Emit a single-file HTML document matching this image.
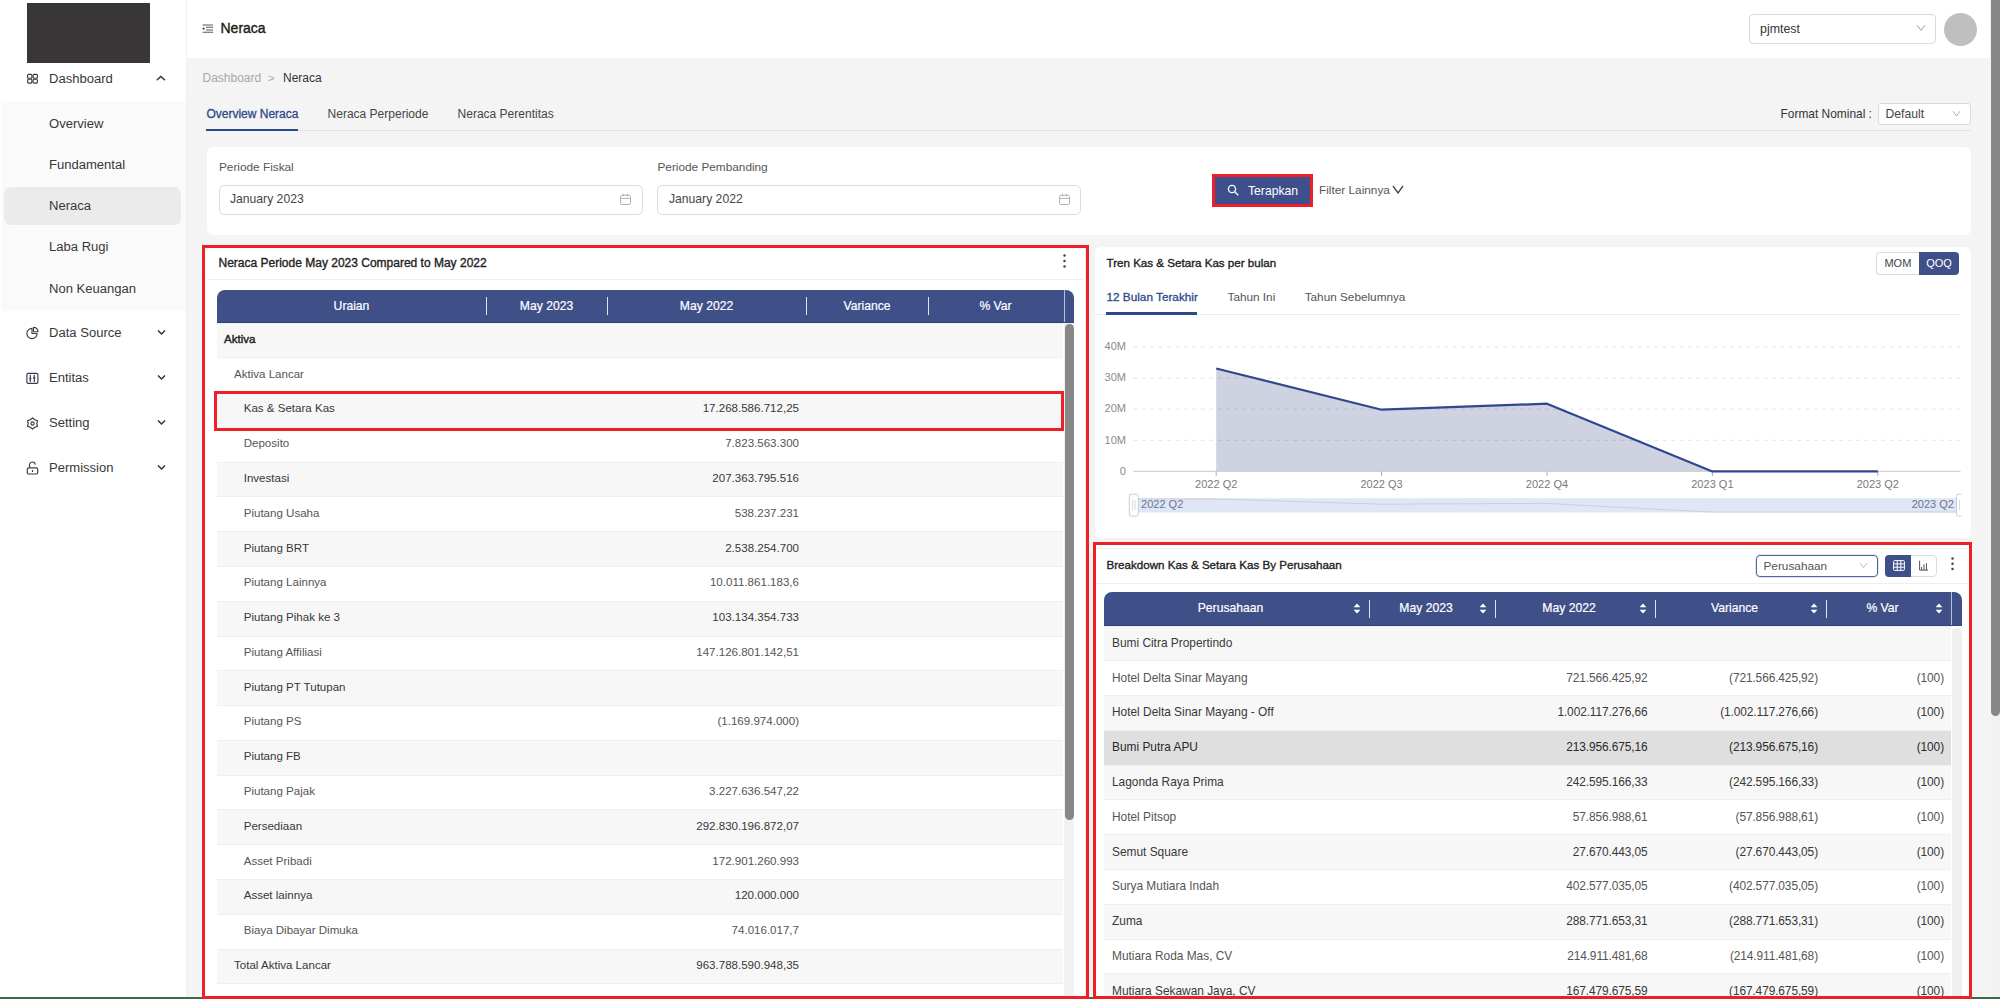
<!DOCTYPE html>
<html><head><meta charset="utf-8"><title>Neraca</title>
<style>
*{box-sizing:border-box;margin:0;padding:0}
html,body{width:2000px;height:999px;overflow:hidden;background:#f4f4f4;font-family:"Liberation Sans",sans-serif;color:#333;position:relative}
.a{position:absolute}
.t{position:absolute;white-space:nowrap;line-height:20px;height:20px}
.side .it{position:absolute;left:49px;font-size:13.05px;color:#383838;white-space:nowrap;line-height:20px;height:20px}
.side svg{position:absolute}
.card{position:absolute;background:#fff;border-radius:6px}
.red{position:absolute;border:3px solid #ee1f27}
.thead{position:absolute;background:#3f5089;border-radius:8px 8px 0 0;border-bottom:1px solid #2c4282;color:#fff;font-size:12.15px;-webkit-text-stroke:0.2px #fff}
.thead .c{position:absolute;top:0;height:100%;display:flex;align-items:center;justify-content:center;white-space:nowrap}
.thead .sep{position:absolute;width:1.4px;background:#dfe4ef}
.rows .r{position:absolute;height:34.78px;border-top:1px solid #efefef;font-size:var(--fs,11.55px);color:#3a3a3a;white-space:nowrap}
.rows .r.g{background:#f7f7f7;color:#383838}
.rows .r.w{background:#fff;color:#555}
.rows .r.h{background:#dfdfdf;color:#2a2a2a}
.rows .r span{position:absolute;top:var(--ty,-0.6px);line-height:33.78px}
.rows .r .v{text-align:right;letter-spacing:var(--ls,0)}
</style></head><body>

<!-- ============ SIDEBAR ============ -->
<div class="side a" style="left:0;top:0;width:186px;height:999px;background:#fff">
  <div class="a" style="left:27px;top:3px;width:123px;height:60px;background:#383637"></div>
  <!-- dashboard -->
  <svg style="left:26px;top:73px" width="13" height="12" viewBox="0 0 13 12"><g fill="none" stroke="#3a3a4a" stroke-width="1.15"><rect x="1.6" y="1.3" width="4.3" height="3.9" rx="1"/><rect x="7.1" y="1.3" width="4.3" height="3.9" rx="1"/><rect x="1.6" y="6.2" width="4.3" height="3.9" rx="1"/><rect x="7.1" y="6.2" width="4.3" height="3.9" rx="1"/></g></svg>
  <div class="it" style="top:68.5px">Dashboard</div>
  <svg style="left:156px;top:74px" width="10" height="8" viewBox="0 0 10 8"><path d="M1.3 5.7 L4.8 2.4 L8.5 5.7" fill="none" stroke="#333" stroke-width="1.5" stroke-linecap="round"/></svg>

  <div class="a" style="left:1px;top:100.5px;width:185px;height:210.5px;background:#fafafa"></div>
  <div class="a" style="left:4px;top:187px;width:177px;height:38px;background:#ebebeb;border-radius:7px"></div>
  <div class="it" style="top:113.9px">Overview</div>
  <div class="it" style="top:154.6px">Fundamental</div>
  <div class="it" style="top:195.9px">Neraca</div>
  <div class="it" style="top:237.1px">Laba Rugi</div>
  <div class="it" style="top:278.6px">Non Keuangan</div>

  <svg style="left:26px;top:326px" width="14" height="14" viewBox="0 0 14 14"><g fill="none" stroke="#3a3a4a" stroke-width="1.15" stroke-linejoin="round"><path d="M6 2.4 A5.1 5.1 0 1 0 11.1 7.5 L6 7.5 Z"/><path d="M7.5 1.2 A4.5 4.5 0 0 1 12 5.7 L7.5 5.7 Z"/></g></svg>
  <div class="it" style="top:322.7px">Data Source</div>
  <svg style="left:157px;top:329px" width="9" height="7" viewBox="0 0 9 7"><path d="M1 1.5 L4.5 5 L8 1.5" fill="none" stroke="#333" stroke-width="1.5"/></svg>

  <svg style="left:26px;top:372px" width="13" height="13" viewBox="0 0 13 13"><g fill="none" stroke="#3a3a4a" stroke-width="1.15"><rect x="0.9" y="1.3" width="11" height="10" rx="1.3"/><path d="M4.3 2.8v7.2M8.3 2.8v7.2"/></g><g fill="#3a3a4a"><circle cx="4.3" cy="6.6" r="1.1"/><circle cx="8.3" cy="5.9" r="1.1"/></g></svg>
  <div class="it" style="top:367.5px">Entitas</div>
  <svg style="left:157px;top:374px" width="9" height="7" viewBox="0 0 9 7"><path d="M1 1.5 L4.5 5 L8 1.5" fill="none" stroke="#333" stroke-width="1.5"/></svg>

  <svg style="left:25.75px;top:417px" width="13" height="13" viewBox="0 0 13 13"><g fill="none" stroke="#3a3a4a" stroke-width="1.15" stroke-linejoin="round"><path d="M6.50 0.80 L8.65 2.78 L11.44 3.65 L10.80 6.50 L11.44 9.35 L8.65 10.22 L6.50 12.20 L4.35 10.22 L1.56 9.35 L2.20 6.50 L1.56 3.65 L4.35 2.78Z"/><circle cx="6.5" cy="6.5" r="1.6"/></g></svg>
  <div class="it" style="top:413.2px">Setting</div>
  <svg style="left:157px;top:419px" width="9" height="7" viewBox="0 0 9 7"><path d="M1 1.5 L4.5 5 L8 1.5" fill="none" stroke="#333" stroke-width="1.5"/></svg>

  <svg style="left:26px;top:461px" width="13" height="14" viewBox="0 0 13 14"><g fill="none" stroke="#3a3a4a" stroke-width="1.15" stroke-linejoin="round"><path d="M3.5 6.6V4.3A2.9 2.9 0 0 1 9.3 3.6"/><rect x="1.3" y="6.8" width="10.4" height="6.2" rx="1.4"/><path d="M6.5 9v2"/></g></svg>
  <div class="it" style="top:458px">Permission</div>
  <svg style="left:157px;top:464px" width="9" height="7" viewBox="0 0 9 7"><path d="M1 1.5 L4.5 5 L8 1.5" fill="none" stroke="#333" stroke-width="1.5"/></svg>
</div>
<div class="a" style="left:186px;top:0;width:1px;height:999px;background:#efefef"></div>

<!-- ============ HEADER ============ -->
<div class="a" style="left:187px;top:0;width:1803px;height:58px;background:#fff"></div>
<svg class="a" style="left:202px;top:23.5px" width="12" height="10" viewBox="0 0 12 10"><g stroke="#5a5a5a" stroke-width="1.1" stroke-linecap="round"><path d="M1 1h9.6M4.4 3.2h6.2M4.4 6h6.2M1 8.2h9.6"/></g><circle cx="1.6" cy="4.6" r="1.05" fill="#333"/></svg>
<div class="t" style="left:220.5px;top:18.3px;font-size:14px;color:#222;-webkit-text-stroke:0.4px #222">Neraca</div>

<div class="a" style="left:1749px;top:13.5px;width:186.5px;height:30px;border:1px solid #d9d9d9;border-radius:4px;background:#fff"></div>
<div class="t" style="left:1760px;top:18.5px;font-size:12.38px;color:#333">pjmtest</div>
<svg class="a" style="left:1916px;top:24px" width="10" height="8" viewBox="0 0 10 8"><path d="M1 1.2 L5 6.3 L9 1.2" fill="none" stroke="#999" stroke-width="1"/></svg>
<div class="a" style="left:1943.75px;top:12.5px;width:33px;height:33px;border-radius:50%;background:#bfbfbf"></div>

<!-- page scrollbar -->
<div class="a" style="left:1990.5px;top:0;width:9.5px;height:999px;background:#f1f1f1"></div>
<div class="a" style="left:1991px;top:0;width:9px;height:716px;background:#878787;border-radius:0 0 5px 5px"></div>

<!-- ============ BREADCRUMB / TABS ============ -->
<div class="t" style="left:202.5px;top:68.3px;font-size:12px;color:#a8a8a8">Dashboard</div>
<div class="t" style="left:268px;top:68.3px;font-size:11px;color:#a8a8a8">&gt;</div>
<div class="t" style="left:283px;top:68.3px;font-size:12px;color:#333">Neraca</div>

<div class="a" style="left:206px;top:130px;width:1765px;height:1px;background:#e3e3e3"></div>
<div class="t" style="left:206.4px;top:103.5px;font-size:12px;color:#2d4a8c;-webkit-text-stroke:0.3px #2d4a8c">Overview Neraca</div>
<div class="a" style="left:206px;top:129px;width:92px;height:2px;background:#2e4890"></div>
<div class="t" style="left:327.6px;top:103.5px;font-size:12px;color:#444">Neraca Perperiode</div>
<div class="t" style="left:457.6px;top:103.5px;font-size:12px;color:#444">Neraca Perentitas</div>

<div class="t" style="left:1780.5px;top:103.5px;font-size:11.93px;color:#333">Format Nominal :</div>
<div class="a" style="left:1878px;top:103px;width:93px;height:21.5px;border:1px solid #d9d9d9;border-radius:3px;background:#fff"></div>
<div class="t" style="left:1885.5px;top:103.5px;font-size:12.18px;color:#444">Default</div>
<svg class="a" style="left:1952px;top:109.5px" width="9" height="8" viewBox="0 0 9 8"><path d="M1 1.2 L4.5 6 L8 1.2" fill="none" stroke="#aaa" stroke-width="1"/></svg>

<!-- ============ FILTER CARD ============ -->
<div class="card" style="left:207px;top:147px;width:1763.5px;height:88px"></div>
<div class="t" style="left:219px;top:156.5px;font-size:11.8px;color:#555">Periode Fiskal</div>
<div class="a" style="left:219px;top:184.5px;width:423.5px;height:30.5px;border:1px solid #dcdcdc;border-radius:5px;background:#fff"></div>
<div class="t" style="left:230px;top:189px;font-size:12.17px;color:#444">January 2023</div>
<svg class="a" style="left:619px;top:193px" width="13" height="13" viewBox="0 0 13 13"><g fill="none" stroke="#b0b0b0" stroke-width="1"><rect x="1.6" y="2.2" width="9.9" height="9.3" rx="1.3"/><path d="M1.6 5.4h9.9M4.6 0.8v2.6M8.6 0.8v2.6"/></g></svg>

<div class="t" style="left:657.5px;top:156.5px;font-size:11.8px;color:#555">Periode Pembanding</div>
<div class="a" style="left:657px;top:184.5px;width:423.5px;height:30.5px;border:1px solid #dcdcdc;border-radius:5px;background:#fff"></div>
<div class="t" style="left:669px;top:189px;font-size:12.17px;color:#444">January 2022</div>
<svg class="a" style="left:1058px;top:193px" width="13" height="13" viewBox="0 0 13 13"><g fill="none" stroke="#b0b0b0" stroke-width="1"><rect x="1.6" y="2.2" width="9.9" height="9.3" rx="1.3"/><path d="M1.6 5.4h9.9M4.6 0.8v2.6M8.6 0.8v2.6"/></g></svg>

<div class="a" style="left:1215px;top:177px;width:95px;height:27px;background:#3f4f8b"></div>
<div class="red" style="left:1212px;top:174px;width:101px;height:33px"></div>
<svg class="a" style="left:1227px;top:184px" width="13" height="13" viewBox="0 0 13 13"><g fill="none" stroke="#fff" stroke-width="1.3"><circle cx="5" cy="5" r="3.6"/><path d="M7.7 7.7l3.6 3.6"/></g></svg>
<div class="t" style="left:1248px;top:180.5px;font-size:12.16px;color:#fff">Terapkan</div>
<div class="t" style="left:1319px;top:180px;font-size:11.82px;color:#555">Filter Lainnya</div>
<svg class="a" style="left:1392px;top:185px" width="12" height="9" viewBox="0 0 12 9"><path d="M1 1 L6 8 L11 1" fill="none" stroke="#444" stroke-width="1.3"/></svg>

<!-- ============ LEFT CARD ============ -->
<div class="a" style="left:205px;top:247.5px;width:880px;height:752px;background:#fff"></div>
<div class="t" style="left:218.5px;top:252.5px;font-size:12px;color:#222;-webkit-text-stroke:0.35px #222">Neraca Periode May 2023 Compared to May 2022</div>
<svg class="a" style="left:1062px;top:253px" width="5" height="16" viewBox="0 0 5 16"><g fill="#444"><circle cx="2.5" cy="2.5" r="1.25"/><circle cx="2.5" cy="8" r="1.25"/><circle cx="2.5" cy="13.5" r="1.25"/></g></svg>
<div class="a" style="left:207px;top:279px;width:876px;height:1px;background:#efefef"></div>

<div class="thead" style="left:217px;top:289.5px;width:856.5px;height:33px">
  <div class="c" style="left:0;width:269px">Uraian</div>
  <div class="c" style="left:269px;width:121px">May 2023</div>
  <div class="c" style="left:390px;width:199px">May 2022</div>
  <div class="c" style="left:589px;width:122px">Variance</div>
  <div class="c" style="left:711px;width:135px">% Var</div>
  <div class="sep" style="left:268.5px;top:7px;height:18.5px"></div>
  <div class="sep" style="left:389.5px;top:7px;height:18.5px"></div>
  <div class="sep" style="left:588.5px;top:7px;height:18.5px"></div>
  <div class="sep" style="left:710.5px;top:7px;height:18.5px"></div>
  <div class="a" style="left:846.5px;top:0;width:1px;height:32px;background:#b9c1d8"></div>
</div>
<div class="rows a" style="left:217px;top:322.5px;width:846px;height:673px;overflow:hidden">
<div class="r g" style="top:0.00px;width:846px"><span style="left:7px;color:#222;-webkit-text-stroke:0.4px #222">Aktiva</span></div>
<div class="r w" style="top:34.78px;width:846px"><span style="left:17px">Aktiva Lancar</span></div>
<div class="r g" style="top:69.56px;width:846px"><span style="left:26.7px">Kas &amp; Setara Kas</span><span class="v" style="right:264px">17.268.586.712,25</span></div>
<div class="r w" style="top:104.34px;width:846px"><span style="left:26.7px">Deposito</span><span class="v" style="right:264px">7.823.563.300</span></div>
<div class="r g" style="top:139.12px;width:846px"><span style="left:26.7px">Investasi</span><span class="v" style="right:264px">207.363.795.516</span></div>
<div class="r w" style="top:173.90px;width:846px"><span style="left:26.7px">Piutang Usaha</span><span class="v" style="right:264px">538.237.231</span></div>
<div class="r g" style="top:208.68px;width:846px"><span style="left:26.7px">Piutang BRT</span><span class="v" style="right:264px">2.538.254.700</span></div>
<div class="r w" style="top:243.46px;width:846px"><span style="left:26.7px">Piutang Lainnya</span><span class="v" style="right:264px">10.011.861.183,6</span></div>
<div class="r g" style="top:278.24px;width:846px"><span style="left:26.7px">Piutang Pihak ke 3</span><span class="v" style="right:264px">103.134.354.733</span></div>
<div class="r w" style="top:313.02px;width:846px"><span style="left:26.7px">Piutang Affiliasi</span><span class="v" style="right:264px">147.126.801.142,51</span></div>
<div class="r g" style="top:347.80px;width:846px"><span style="left:26.7px">Piutang PT Tutupan</span></div>
<div class="r w" style="top:382.58px;width:846px"><span style="left:26.7px">Piutang PS</span><span class="v" style="right:264px">(1.169.974.000)</span></div>
<div class="r g" style="top:417.36px;width:846px"><span style="left:26.7px">Piutang FB</span></div>
<div class="r w" style="top:452.14px;width:846px"><span style="left:26.7px">Piutang Pajak</span><span class="v" style="right:264px">3.227.636.547,22</span></div>
<div class="r g" style="top:486.92px;width:846px"><span style="left:26.7px">Persediaan</span><span class="v" style="right:264px">292.830.196.872,07</span></div>
<div class="r w" style="top:521.70px;width:846px"><span style="left:26.7px">Asset Pribadi</span><span class="v" style="right:264px">172.901.260.993</span></div>
<div class="r g" style="top:556.48px;width:846px"><span style="left:26.7px">Asset lainnya</span><span class="v" style="right:264px">120.000.000</span></div>
<div class="r w" style="top:591.26px;width:846px"><span style="left:26.7px">Biaya Dibayar Dimuka</span><span class="v" style="right:264px">74.016.017,7</span></div>
<div class="r g" style="top:626.04px;width:846px"><span style="left:17px">Total Aktiva Lancar</span><span class="v" style="right:264px">963.788.590.948,35</span></div>
<div class="r w" style="top:660.82px;width:846px"><span style="left:0px"></span></div>

</div>
<div class="a" style="left:1064px;top:322.5px;width:10px;height:673px;background:#f1f1f1"></div>
<div class="a" style="left:1065px;top:324px;width:9px;height:496px;background:#878787;border-radius:4.5px"></div>
<div class="red" style="left:214.3px;top:391px;width:849.7px;height:39.5px"></div>
<div class="red" style="left:202px;top:244.5px;width:887px;height:754.5px;z-index:2"></div>

<!-- ============ CHART CARD ============ -->
<div class="card" style="left:1094.5px;top:247px;width:876px;height:290.5px"></div>
<div class="t" style="left:1106.5px;top:252.5px;font-size:11.6px;color:#222;-webkit-text-stroke:0.35px #222">Tren Kas &amp; Setara Kas per bulan</div>
<div class="a" style="left:1876.4px;top:252.2px;width:43px;height:22.4px;border:1px solid #d9d9d9;border-right:none;border-radius:4px 0 0 4px;background:#fff"></div>
<div class="a" style="left:1918.9px;top:252.2px;width:40.3px;height:22.4px;background:#3f5089;border-radius:0 4px 4px 0"></div>
<div class="t" style="left:1876.4px;top:252.5px;width:43px;text-align:center;font-size:11px;color:#444">MOM</div>
<div class="t" style="left:1918.9px;top:252.5px;width:40.3px;text-align:center;font-size:11px;color:#fff">QOQ</div>
<div class="a" style="left:1095px;top:313.5px;width:865px;height:1px;background:#ececec"></div>
<div class="t" style="left:1106.5px;top:286.7px;font-size:11.78px;color:#2d4a8c;-webkit-text-stroke:0.3px #2d4a8c">12 Bulan Terakhir</div>
<div class="a" style="left:1106px;top:312px;width:91px;height:2.5px;background:#2e4890"></div>
<div class="t" style="left:1227.5px;top:286.7px;font-size:11.78px;color:#555">Tahun Ini</div>
<div class="t" style="left:1304.7px;top:286.7px;font-size:11.78px;color:#555">Tahun Sebelumnya</div>
<svg class="a" style="left:0;top:0" width="2000" height="999" viewBox="0 0 2000 999">
<g font-family="Liberation Sans" font-size="11.04" fill="#8a8a8a"><text x="1126" y="350.2" text-anchor="end">40M</text><text x="1126" y="381.3" text-anchor="end">30M</text><text x="1126" y="412.4" text-anchor="end">20M</text><text x="1126" y="443.5" text-anchor="end">10M</text><text x="1126" y="474.6" text-anchor="end">0</text></g>
<path d="M1216.2,471.4 L1216.2,368.5 L1381.6,409.7 L1547.0,403.7 L1712.4,471.4 L1877.8,471.4 L1877.8,471.4 Z" fill="#3f5089" fill-opacity="0.25"/>
<line x1="1133.5" y1="347" x2="1960.5" y2="347" stroke="#000" stroke-opacity="0.11" stroke-width="1" stroke-dasharray="4 4.4"/><line x1="1133.5" y1="378.1" x2="1960.5" y2="378.1" stroke="#000" stroke-opacity="0.11" stroke-width="1" stroke-dasharray="4 4.4"/><line x1="1133.5" y1="409.2" x2="1960.5" y2="409.2" stroke="#000" stroke-opacity="0.11" stroke-width="1" stroke-dasharray="4 4.4"/><line x1="1133.5" y1="440.3" x2="1960.5" y2="440.3" stroke="#000" stroke-opacity="0.11" stroke-width="1" stroke-dasharray="4 4.4"/>

<line x1="1133.5" y1="471.4" x2="1960.5" y2="471.4" stroke="#d2d2d2" stroke-width="1.2"/>
<line x1="1216.2" y1="471.4" x2="1216.2" y2="476" stroke="#aaa" stroke-width="1"/><line x1="1381.6" y1="471.4" x2="1381.6" y2="476" stroke="#aaa" stroke-width="1"/><line x1="1547.0" y1="471.4" x2="1547.0" y2="476" stroke="#aaa" stroke-width="1"/><line x1="1712.4" y1="471.4" x2="1712.4" y2="476" stroke="#aaa" stroke-width="1"/><line x1="1877.8" y1="471.4" x2="1877.8" y2="476" stroke="#aaa" stroke-width="1"/>
<polyline points="1216.2,368.5 1381.6,409.7 1547.0,403.7 1712.4,471.4 1877.8,471.4" fill="none" stroke="#2f4690" stroke-width="2.2" stroke-linejoin="round"/>
<g font-family="Liberation Sans" font-size="11.04" fill="#7a7a7a"><text x="1216.2" y="487.7" text-anchor="middle">2022 Q2</text><text x="1381.6" y="487.7" text-anchor="middle">2022 Q3</text><text x="1547.0" y="487.7" text-anchor="middle">2022 Q4</text><text x="1712.4" y="487.7" text-anchor="middle">2023 Q1</text><text x="1877.8" y="487.7" text-anchor="middle">2023 Q2</text></g>
<rect x="1133.5" y="498.2" width="823.5" height="14.3" fill="#dfe7f6"/>
<path d="M1133.5,499.0 L1215.9,499.0 L1380.5,504.2 L1545.2,503.4 L1710.0,512.0 L1874.6,512.0 L1957,512" fill="none" stroke="#c3c9d6" stroke-width="0.8"/>
<rect x="1129.3" y="494.2" width="9" height="22" rx="2" fill="#fff" stroke="#c9ced8" stroke-width="1"/>
<path d="M1132.6 500v10M1135 500v10" stroke="#c9ced8" stroke-width="0.8"/>
<path d="M1961.5 494.2 H1958.5 Q1956.5 494.2 1956.5 496.2 V514.2 Q1956.5 516.2 1958.5 516.2 H1961.5" fill="#fff" stroke="#c9ced8" stroke-width="1"/><path d="M1959.5 500v10" stroke="#c9ced8" stroke-width="0.8"/>
<g font-family="Liberation Sans" font-size="11.04" fill="#6b7390"><text x="1141" y="508">2022 Q2</text><text x="1954" y="508" text-anchor="end">2023 Q2</text></g>
</svg>

<!-- ============ BREAKDOWN CARD ============ -->
<div class="a" style="left:1095.5px;top:545px;width:873.5px;height:454px;background:#fff"></div>
<div class="a" style="left:1097px;top:547.5px;width:870px;height:1px;background:#efefef"></div>
<div class="t" style="left:1106.5px;top:555.3px;font-size:11.6px;color:#222;-webkit-text-stroke:0.35px #222">Breakdown Kas &amp; Setara Kas By Perusahaan</div>
<div class="a" style="left:1756px;top:554.75px;width:122px;height:22.5px;border:1.3px solid #55659c;border-radius:4px;background:#fff;box-shadow:0 0 0 1px rgba(63,80,137,0.15)"></div>
<div class="t" style="left:1763.5px;top:556px;font-size:11.8px;color:#555">Perusahaan</div>
<svg class="a" style="left:1858.5px;top:562px" width="9" height="7" viewBox="0 0 9 7"><path d="M1 1.2 L4.5 5.5 L8 1.2" fill="none" stroke="#bbb" stroke-width="1"/></svg>
<div class="a" style="left:1885.25px;top:555px;width:51.6px;height:21.5px;border:1px solid #dcdcdc;border-radius:4px;background:#fff"></div>
<div class="a" style="left:1885.25px;top:555px;width:26px;height:21.5px;background:#3f5089;border-radius:4px 0 0 4px"></div>
<svg class="a" style="left:1892.5px;top:559.7px" width="12" height="11" viewBox="0 0 12 11"><g fill="none" stroke="#fff" stroke-width="1"><rect x="0.6" y="0.6" width="10.8" height="9.8" rx="1"/><path d="M0.6 3.9h10.8M0.6 7.2h10.8M4.2 0.6v9.8M7.8 0.6v9.8"/></g></svg>
<svg class="a" style="left:1918px;top:559.5px" width="11" height="11" viewBox="0 0 11 11"><g fill="none" stroke="#444" stroke-width="0.9"><path d="M1.6 0.8V10.1H10"/><path d="M3.6 10V7M6 10V4.2M8.5 10V3.2"/></g></svg>
<svg class="a" style="left:1949.5px;top:556px" width="5" height="16" viewBox="0 0 5 16"><g fill="#444"><circle cx="2.5" cy="2.5" r="1.25"/><circle cx="2.5" cy="7.8" r="1.25"/><circle cx="2.5" cy="13" r="1.25"/></g></svg>
<div class="a" style="left:1097px;top:582.5px;width:871px;height:1px;background:#efefef"></div>
<div class="thead" style="left:1104px;top:591.5px;width:857.5px;height:34px">
<div class="c" style="left:0px;width:253px">Perusahaan</div><svg class="a" style="left:249.0px;top:11.5px" width="8" height="11" viewBox="0 0 8 11"><path d="M4 0.6 L7.4 4.3 L0.6 4.3Z M4 10.4 L7.4 6.7 L0.6 6.7Z" fill="#fff"/></svg><div class="c" style="left:265px;width:114px">May 2023</div><svg class="a" style="left:375.0px;top:11.5px" width="8" height="11" viewBox="0 0 8 11"><path d="M4 0.6 L7.4 4.3 L0.6 4.3Z M4 10.4 L7.4 6.7 L0.6 6.7Z" fill="#fff"/></svg><div class="c" style="left:391px;width:148px">May 2022</div><svg class="a" style="left:535.0px;top:11.5px" width="8" height="11" viewBox="0 0 8 11"><path d="M4 0.6 L7.4 4.3 L0.6 4.3Z M4 10.4 L7.4 6.7 L0.6 6.7Z" fill="#fff"/></svg><div class="c" style="left:551px;width:159px">Variance</div><svg class="a" style="left:706.0px;top:11.5px" width="8" height="11" viewBox="0 0 8 11"><path d="M4 0.6 L7.4 4.3 L0.6 4.3Z M4 10.4 L7.4 6.7 L0.6 6.7Z" fill="#fff"/></svg><div class="c" style="left:722px;width:113px">% Var</div><svg class="a" style="left:831.0px;top:11.5px" width="8" height="11" viewBox="0 0 8 11"><path d="M4 0.6 L7.4 4.3 L0.6 4.3Z M4 10.4 L7.4 6.7 L0.6 6.7Z" fill="#fff"/></svg><div class="sep" style="left:264.5px;top:8.5px;height:18px"></div><div class="sep" style="left:390.5px;top:8.5px;height:18px"></div><div class="sep" style="left:550.5px;top:8.5px;height:18px"></div><div class="sep" style="left:721.5px;top:8.5px;height:18px"></div>
  <div class="a" style="left:847px;top:0;width:1px;height:33px;background:#b9c1d8"></div>
</div>
<div class="rows a" style="left:1104px;top:625.5px;width:847px;height:370px;overflow:hidden;--fs:11.9px;--ty:0.4px;--ls:-0.1px">
<div class="r g" style="top:0.00px;width:847px"><span style="left:8px">Bumi Citra Propertindo</span></div>
<div class="r w" style="top:34.78px;width:847px"><span style="left:8px">Hotel Delta Sinar Mayang</span><span class="v" style="right:303.5px">721.566.425,92</span><span class="v" style="right:133px">(721.566.425,92)</span><span class="v" style="right:7px">(100)</span></div>
<div class="r g" style="top:69.56px;width:847px"><span style="left:8px">Hotel Delta Sinar Mayang - Off</span><span class="v" style="right:303.5px">1.002.117.276,66</span><span class="v" style="right:133px">(1.002.117.276,66)</span><span class="v" style="right:7px">(100)</span></div>
<div class="r h" style="top:104.34px;width:847px"><span style="left:8px">Bumi Putra APU</span><span class="v" style="right:303.5px">213.956.675,16</span><span class="v" style="right:133px">(213.956.675,16)</span><span class="v" style="right:7px">(100)</span></div>
<div class="r g" style="top:139.12px;width:847px"><span style="left:8px">Lagonda Raya Prima</span><span class="v" style="right:303.5px">242.595.166,33</span><span class="v" style="right:133px">(242.595.166,33)</span><span class="v" style="right:7px">(100)</span></div>
<div class="r w" style="top:173.90px;width:847px"><span style="left:8px">Hotel Pitsop</span><span class="v" style="right:303.5px">57.856.988,61</span><span class="v" style="right:133px">(57.856.988,61)</span><span class="v" style="right:7px">(100)</span></div>
<div class="r g" style="top:208.68px;width:847px"><span style="left:8px">Semut Square</span><span class="v" style="right:303.5px">27.670.443,05</span><span class="v" style="right:133px">(27.670.443,05)</span><span class="v" style="right:7px">(100)</span></div>
<div class="r w" style="top:243.46px;width:847px"><span style="left:8px">Surya Mutiara Indah</span><span class="v" style="right:303.5px">402.577.035,05</span><span class="v" style="right:133px">(402.577.035,05)</span><span class="v" style="right:7px">(100)</span></div>
<div class="r g" style="top:278.24px;width:847px"><span style="left:8px">Zuma</span><span class="v" style="right:303.5px">288.771.653,31</span><span class="v" style="right:133px">(288.771.653,31)</span><span class="v" style="right:7px">(100)</span></div>
<div class="r w" style="top:313.02px;width:847px"><span style="left:8px">Mutiara Roda Mas, CV</span><span class="v" style="right:303.5px">214.911.481,68</span><span class="v" style="right:133px">(214.911.481,68)</span><span class="v" style="right:7px">(100)</span></div>
<div class="r g" style="top:347.80px;width:847px"><span style="left:8px">Mutiara Sekawan Jaya, CV</span><span class="v" style="right:303.5px">167.479.675,59</span><span class="v" style="right:133px">(167.479.675,59)</span><span class="v" style="right:7px">(100)</span></div>
</div>
<div class="a" style="left:1952px;top:627.5px;width:9.5px;height:370px;background:#efefef;border-radius:4.5px 4.5px 0 0"></div>
<div class="red" style="left:1092.5px;top:542px;width:879.5px;height:457px;z-index:2"></div>

<div class="a" style="left:0;top:997px;width:2000px;height:2px;background:#3d6a46;z-index:-0"></div>
<!--END-->
</body></html>
